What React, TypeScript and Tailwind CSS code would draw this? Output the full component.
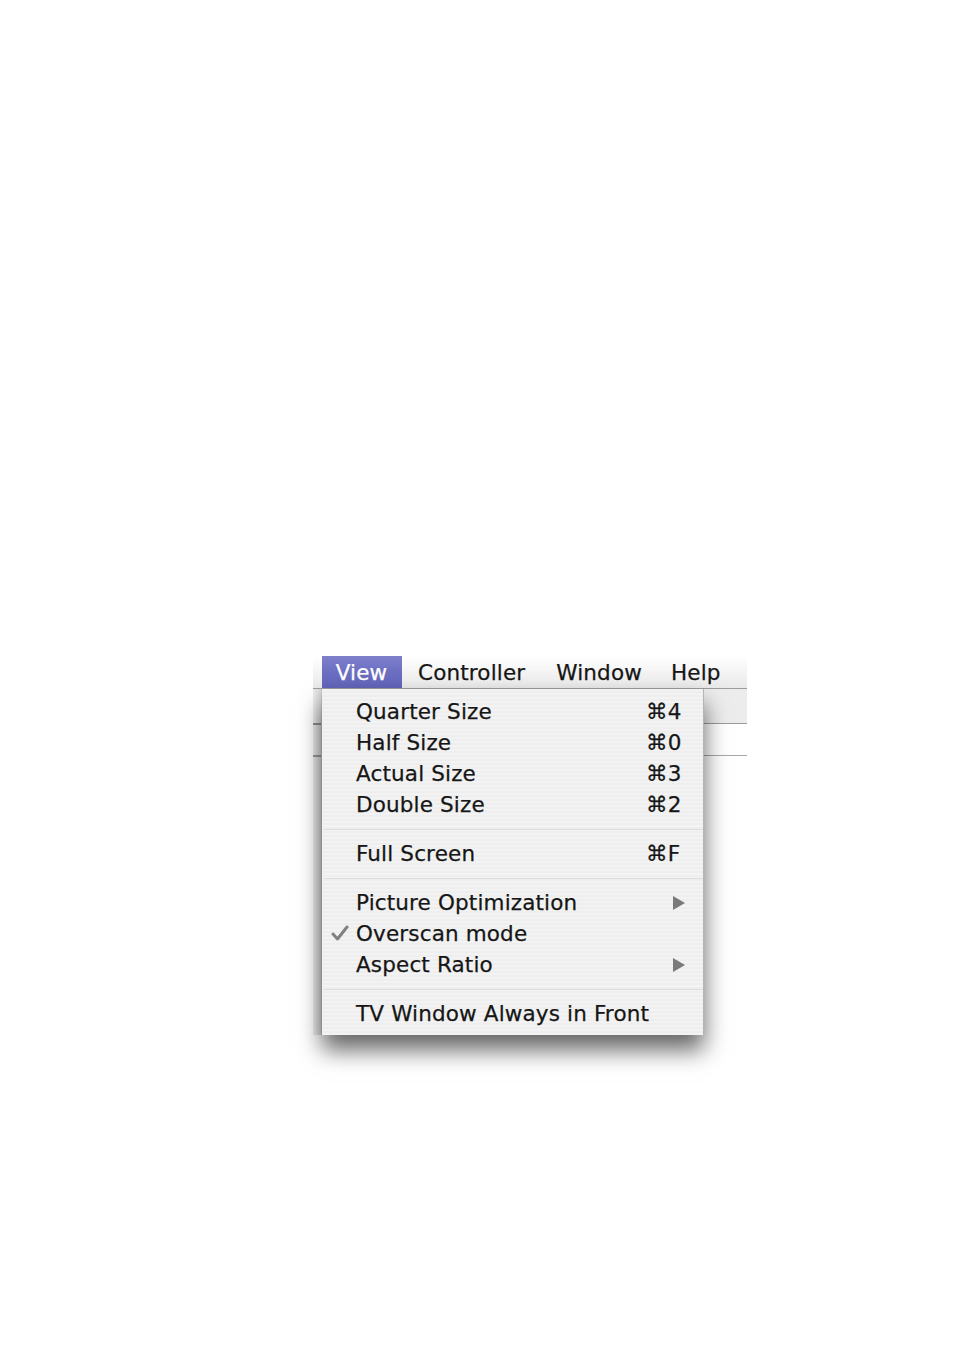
import React from "react";

const font = { fontFamily: '"DejaVu Sans", "Liberation Sans", sans-serif' };

type Item =
  | { kind: "item"; label: string; shortcut?: string; submenu?: boolean; checked?: boolean }
  | { kind: "sep" };

const items: Item[] = [
  { kind: "item", label: "Quarter Size", shortcut: "⌘4" },
  { kind: "item", label: "Half Size", shortcut: "⌘0" },
  { kind: "item", label: "Actual Size", shortcut: "⌘3" },
  { kind: "item", label: "Double Size", shortcut: "⌘2" },
  { kind: "sep" },
  { kind: "item", label: "Full Screen", shortcut: "⌘F" },
  { kind: "sep" },
  { kind: "item", label: "Picture Optimization", submenu: true },
  { kind: "item", label: "Overscan mode", checked: true },
  { kind: "item", label: "Aspect Ratio", submenu: true },
  { kind: "sep" },
  { kind: "item", label: "TV Window Always in Front" },
];

function Check() {
  return (
    <svg width="18" height="18" viewBox="0 0 18 18" className="absolute left-[9px] top-[6px]">
      <path d="M2 10 L6.5 15 L16 3" fill="none" stroke="#808080" strokeWidth="3" strokeLinecap="round" strokeLinejoin="round" />
    </svg>
  );
}

function Arrow() {
  return (
    <svg width="14" height="16" viewBox="0 0 14 16" className="ml-[26px]">
      <path d="M1 1 L13 8 L1 15 Z" fill="#7a7a7a" />
    </svg>
  );
}

export default function App() {
  return (
    <div className="min-h-[1350px] w-[954px] bg-white pt-[656px] pl-[313px]" style={font}>
      <div className="relative w-[434px]">
        {/* menu bar */}
        <div className="flex h-[33px] items-stretch border-b border-[#9c9c9c] bg-[linear-gradient(180deg,#ffffff_0%,#f4f4f4_50%,#e9e9e9_100%)] pl-[9px] text-[21.5px] leading-none tracking-[0.15px] text-[#161616] [-webkit-text-stroke:0.25px_#161616]">
          <div className="flex w-[80px] items-center justify-center bg-[linear-gradient(180deg,#7e80cc_0%,#6c6fc2_50%,#6164b8_100%)] pr-[1px] pt-[1px] text-white [-webkit-text-stroke:0.25px_#ffffff]">
            View
          </div>
          <div className="flex items-center pl-[16px] pr-[31px] pt-[1px]">Controller</div>
          <div className="flex items-center pr-[29px] pt-[1px]">Window</div>
          <div className="flex items-center pt-[1px]">Help</div>
        </div>

        {/* window behind */}
        <div className="flex h-[346px]">
          <div className="w-[9px] border-r border-[#c8c8c8] bg-[linear-gradient(90deg,#eeeeee,#d9d9d9)]">
            <div className="h-[34px]" />
            <div className="h-[2px] bg-[#8f8f8f]" />
            <div className="h-[30px]" />
            <div className="h-[2px] bg-[#9a9a9a]" />
          </div>
          <div className="flex-1">
            <div className="h-[34px] bg-[#ececec]" />
            <div className="h-[1px] bg-[#9a9a9a]" />
            <div className="h-[31px] bg-white" />
            <div className="h-[1px] bg-[#a8a8a8]" />
          </div>
        </div>

        {/* dropdown menu */}
        <div className="absolute left-[9px] top-[33px] w-[382px] border-r border-[#b5b5b5] bg-[repeating-linear-gradient(180deg,#f3f3f3_0px,#f3f3f3_2px,#eeeeee_2px,#eeeeee_4px)] pt-[7px] pb-[6px] text-[21.5px] leading-none tracking-[0.15px] text-[#161616] shadow-[0_15px_22px_rgba(0,0,0,0.6)] [-webkit-text-stroke:0.25px_#161616]">
          {items.map((it, i) =>
            it.kind === "sep" ? (
              <div key={i} className="flex h-[18px] items-center pl-[2px]">
                <div className="h-[1px] w-full bg-[#dcdcdc]" />
              </div>
            ) : (
              <div key={i} className="relative flex h-[31px] items-center pl-[34px]">
                {it.checked && <Check />}
                <span className="flex-1 whitespace-nowrap">{it.label}</span>
                <span className="flex w-[57px] items-center whitespace-nowrap">
                  {it.shortcut}
                  {it.submenu && <Arrow />}
                </span>
              </div>
            )
          )}
        </div>
      </div>
    </div>
  );
}
